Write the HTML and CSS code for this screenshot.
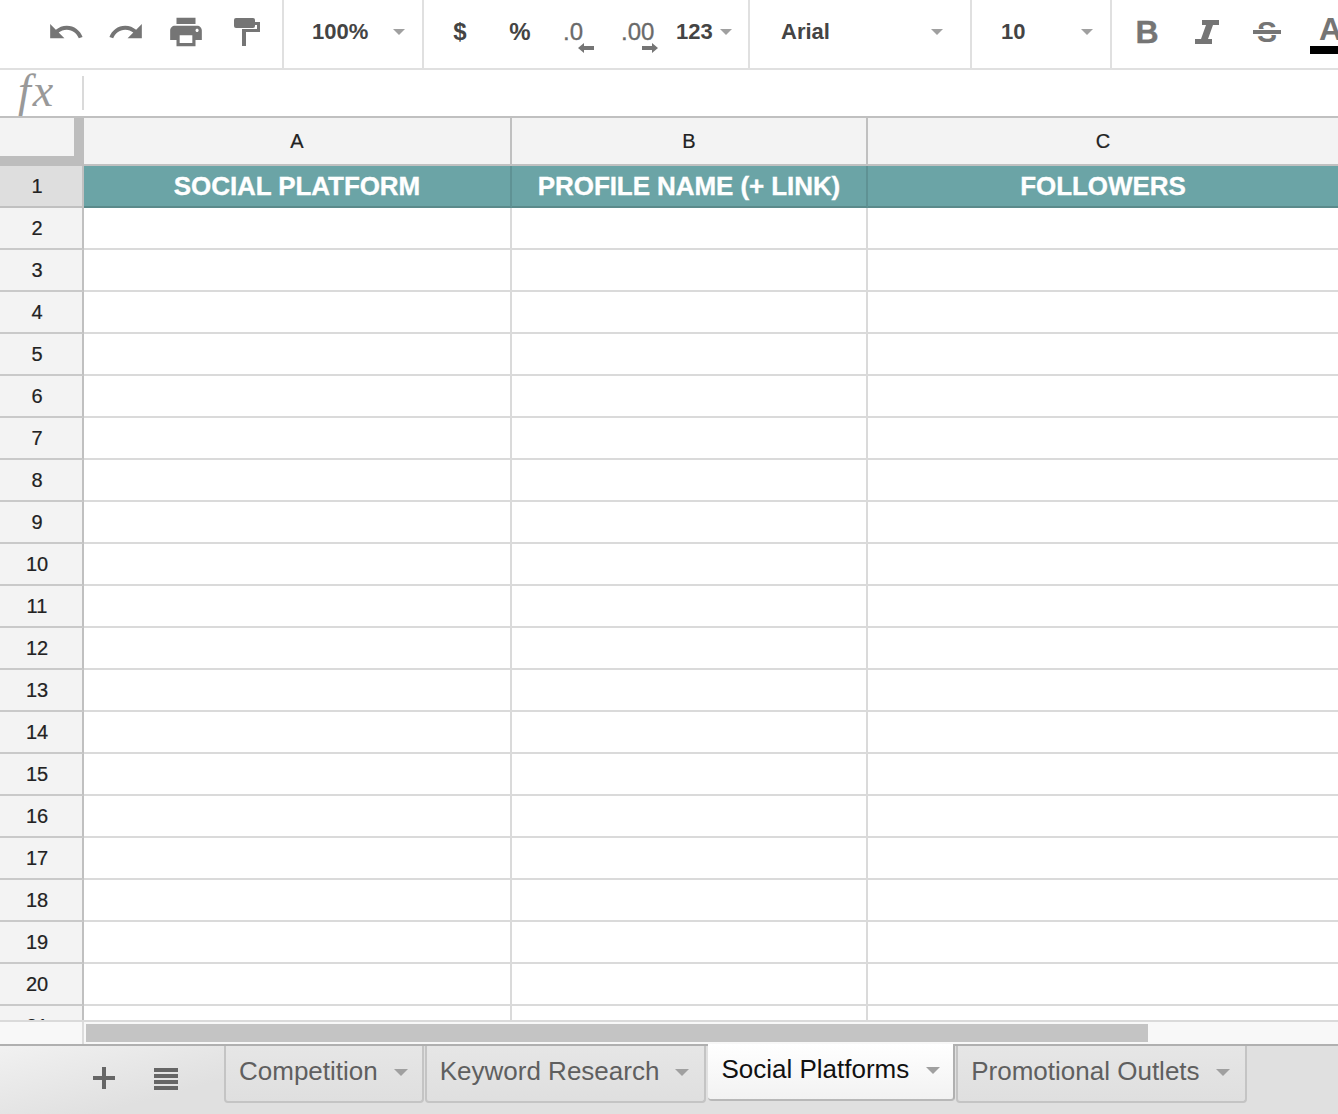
FILE: index.html
```html
<!DOCTYPE html>
<html lang="en">
<head>
<meta charset="utf-8">
<title>Social Platforms</title>
<link rel="stylesheet" href="styles.css">
</head>
<body>
<div class="app">
  <div class="toolbar">
    <div class="group group-history">
      <span class="slot"><svg class="icon-38" viewBox="0 0 24 24"><path d="M12.5 8c-2.65 0-5.05.99-6.9 2.6L2 7v9h9l-3.62-3.62c1.39-1.16 3.16-1.88 5.12-1.88 3.54 0 6.55 2.31 7.6 5.5l2.37-.78C21.08 11.03 17.15 8 12.5 8z"/></svg></span>
      <span class="slot"><svg class="icon-38" viewBox="0 0 24 24"><path d="M18.4 10.6C16.55 8.99 14.15 8 11.5 8c-4.65 0-8.58 3.03-9.96 7.22L3.9 16c1.05-3.19 4.05-5.5 7.6-5.5 1.95 0 3.73.72 5.12 1.88L13 16h9V7l-3.6 3.6z"/></svg></span>
      <span class="slot"><svg class="icon-38" viewBox="0 0 24 24"><path d="M19 8H5c-1.66 0-3 1.34-3 3v6h4v4h12v-4h4v-6c0-1.66-1.34-3-3-3zm-3 11H8v-5h8v5zm3-7c-.55 0-1-.45-1-1s.45-1 1-1 1 .45 1 1-.45 1-1 1zm-1-9H6v4h12V3z"/></svg></span>
      <span class="slot"><svg class="icon-paint" viewBox="0 0 26 28"><path d="M2 0h17a2 2 0 0 1 2 2v6a2 2 0 0 1-2 2H2a2 2 0 0 1-2-2V2a2 2 0 0 1 2-2z"/><path d="M21 4h5v10H12v14H8V11h15V7h-2z"/></svg></span>
    </div>
    <div class="group group-zoom">
      <span class="label">100%</span><span class="caret"></span>
    </div>
    <div class="group group-format">
      <span class="slot"><span class="label label-24">$</span></span>
      <span class="slot"><span class="label label-24">%</span></span>
      <span class="slot slot-dec">
        <span class="dec">.0</span>
        <svg class="arrow arrow-left" viewBox="0 0 16 10"><path d="M0 5l6-5v3h10v4H6v3z"/></svg>
      </span>
      <span class="slot slot-inc">
        <span class="dec">.00</span>
        <svg class="arrow arrow-right" viewBox="0 0 16 10"><path d="M16 5l-6-5v3H0v4h10v3z"/></svg>
      </span>
      <span class="more"><span class="label">123</span><span class="caret"></span></span>
    </div>
    <div class="group group-font">
      <span class="label">Arial</span><span class="caret"></span>
    </div>
    <div class="group group-size">
      <span class="label">10</span><span class="caret"></span>
    </div>
    <div class="group group-style">
      <span class="slot"><span class="glyph">B</span></span>
      <span class="slot"><svg class="icon-italic" viewBox="0 0 24 24"><path d="M7 0h17v5h-6l-5 14h4v5H0v-5h6l5-14H7z"/></svg></span>
      <span class="slot slot-strike"><span class="glyph glyph-s">S</span></span>
      <span class="slot slot-color"><span class="glyph glyph-a">A</span></span>
    </div>
  </div>

  <div class="formula">
    <span class="fx">fx</span>
    <span class="formula-sep"></span>
  </div>

  <div class="sheet">
    <div class="row row-head">
      <div class="rh corner"></div>
      <div class="cell a">A</div>
      <div class="cell b">B</div>
      <div class="cell c">C</div>
    </div>
    <div class="row row-title">
      <div class="rh">1</div>
      <div class="cell a">SOCIAL PLATFORM</div>
      <div class="cell b">PROFILE NAME (+ LINK)</div>
      <div class="cell c">FOLLOWERS</div>
    </div>
    <div class="row"><div class="rh">2</div><div class="cell a"></div><div class="cell b"></div><div class="cell c"></div></div>
    <div class="row"><div class="rh">3</div><div class="cell a"></div><div class="cell b"></div><div class="cell c"></div></div>
    <div class="row"><div class="rh">4</div><div class="cell a"></div><div class="cell b"></div><div class="cell c"></div></div>
    <div class="row"><div class="rh">5</div><div class="cell a"></div><div class="cell b"></div><div class="cell c"></div></div>
    <div class="row"><div class="rh">6</div><div class="cell a"></div><div class="cell b"></div><div class="cell c"></div></div>
    <div class="row"><div class="rh">7</div><div class="cell a"></div><div class="cell b"></div><div class="cell c"></div></div>
    <div class="row"><div class="rh">8</div><div class="cell a"></div><div class="cell b"></div><div class="cell c"></div></div>
    <div class="row"><div class="rh">9</div><div class="cell a"></div><div class="cell b"></div><div class="cell c"></div></div>
    <div class="row"><div class="rh">10</div><div class="cell a"></div><div class="cell b"></div><div class="cell c"></div></div>
    <div class="row"><div class="rh">11</div><div class="cell a"></div><div class="cell b"></div><div class="cell c"></div></div>
    <div class="row"><div class="rh">12</div><div class="cell a"></div><div class="cell b"></div><div class="cell c"></div></div>
    <div class="row"><div class="rh">13</div><div class="cell a"></div><div class="cell b"></div><div class="cell c"></div></div>
    <div class="row"><div class="rh">14</div><div class="cell a"></div><div class="cell b"></div><div class="cell c"></div></div>
    <div class="row"><div class="rh">15</div><div class="cell a"></div><div class="cell b"></div><div class="cell c"></div></div>
    <div class="row"><div class="rh">16</div><div class="cell a"></div><div class="cell b"></div><div class="cell c"></div></div>
    <div class="row"><div class="rh">17</div><div class="cell a"></div><div class="cell b"></div><div class="cell c"></div></div>
    <div class="row"><div class="rh">18</div><div class="cell a"></div><div class="cell b"></div><div class="cell c"></div></div>
    <div class="row"><div class="rh">19</div><div class="cell a"></div><div class="cell b"></div><div class="cell c"></div></div>
    <div class="row"><div class="rh">20</div><div class="cell a"></div><div class="cell b"></div><div class="cell c"></div></div>
    <div class="row"><div class="rh">21</div><div class="cell a"></div><div class="cell b"></div><div class="cell c"></div></div>
  </div>

  <div class="hscroll">
    <div class="hscroll-corner"></div>
    <div class="hscroll-thumb"></div>
  </div>

  <div class="tabbar">
    <svg class="tab-plus" viewBox="0 0 22 22"><path d="M9 0h4v9h9v4h-9v9H9v-9H0V9h9z"/></svg>
    <svg class="tab-list" viewBox="0 0 24 22"><path d="M0 0h24v4H0zM0 6h24v4H0zM0 12h24v4H0zM0 18h24v4H0z"/></svg>
    <div class="tab tab-first"><span>Competition</span><span class="caret"></span></div>
    <div class="tab"><span>Keyword Research</span><span class="caret"></span></div>
    <div class="tab tab-active"><span>Social Platforms</span><span class="caret"></span></div>
    <div class="tab"><span>Promotional Outlets</span><span class="caret"></span></div>
  </div>
</div>
</body>
</html>
```
FILE: styles.css
```css
* { box-sizing: border-box; }
html, body { margin: 0; padding: 0; }
body {
  width: 1338px;
  height: 1114px;
  overflow: hidden;
  background: #fff;
  font-family: "Liberation Sans", Arial, sans-serif;
}
.app { display: flex; flex-direction: column; width: 1338px; height: 1114px; overflow: hidden; }

/* toolbar */
.toolbar {
  display: flex;
  flex: 0 0 70px;
  border-bottom: 2px solid #e0e0e0;
}
.group {
  display: flex;
  align-items: center;
  height: 68px;
  padding-bottom: 4px;
  border-right: 2px solid #e0e0e0;
  flex: 0 0 auto;
}
.group svg { fill: #757575; display: block; }
.group-history { width: 284px; padding-left: 36px; }
.group-zoom { width: 140px; padding-left: 28px; padding-right: 17px; justify-content: space-between; }
.group-format { width: 326px; padding-left: 6px; }
.group-font { width: 222px; padding-left: 31px; padding-right: 27px; justify-content: space-between; }
.group-size { width: 140px; padding-left: 29px; padding-right: 17px; justify-content: space-between; }
.group-style { flex: 1 1 auto; padding-left: 5px; border-right: 0; overflow: hidden; }

.slot {
  position: relative;
  display: flex;
  align-items: center;
  justify-content: center;
  flex: 0 0 60px;
  height: 60px;
}
.icon-38 { width: 38px; height: 38px; }
.icon-paint { width: 26px; height: 28px; margin-left: 1px; }
.icon-italic { width: 24px; height: 24px; }

.label { font-size: 22px; font-weight: 700; color: #444; line-height: 26px; }
.label-24 { font-size: 24px; }
.dec { font-size: 24px; color: #6a6a6a; line-height: 26px; -webkit-text-stroke: .3px #6a6a6a; }
.slot-dec { justify-content: flex-start; padding-left: 13px; }
.slot-inc { justify-content: flex-start; padding-left: 11px; }
.arrow { position: absolute; top: 41px; width: 16px; height: 10px; }
.arrow-left { left: 28px; }
.arrow-right { left: 32px; }
.more { display: flex; align-items: center; margin-left: 6px; }
.more .caret { margin-left: 7px; }

.caret {
  display: inline-block;
  width: 0;
  height: 0;
  flex: 0 0 auto;
  border-left: 6px solid transparent;
  border-right: 6px solid transparent;
  border-top: 6px solid #a0a0a0;
}

.glyph { font-size: 32px; font-weight: 700; color: #757575; line-height: 36px; -webkit-text-stroke: .4px #757575; }
.glyph-s {
  position: relative;
  display: block;
  padding: 0 4px;
  font-size: 30px;
  -webkit-text-stroke: 0;
}
.glyph-s::after {
  content: "";
  position: absolute;
  left: 0;
  right: 0;
  top: 16px;
  height: 4px;
  background: #757575;
  box-shadow: 0 0 0 1px #fff;
}
.slot-color { flex-direction: column; justify-content: flex-start; align-items: flex-start; padding-left: 13px; padding-top: 8px; height: 60px; }
.glyph-a {
  display: block;
  width: 28px;
  height: 44px;
  padding-left: 9px;
  line-height: 38px;
  -webkit-text-stroke: 0;
  overflow: hidden;
  border-bottom: 8px solid #000;
}

/* formula bar */
.formula {
  display: flex;
  align-items: center;
  flex: 0 0 48px;
  height: 48px;
  padding-left: 18px;
  border-bottom: 2px solid #c0c0c0;
}
.fx {
  width: 64px;
  margin-top: -4px;
  font-family: "Liberation Serif", "Times New Roman", serif;
  font-style: italic;
  font-size: 46px;
  line-height: 46px;
  letter-spacing: 2px;
  color: #999;
}
.formula-sep { display: block; width: 2px; height: 34px; background: #dadada; }

/* sheet */
.sheet { flex: 0 0 902px; height: 902px; overflow: hidden; }
.row { display: flex; height: 42px; }
.rh {
  flex: 0 0 84px;
  display: flex;
  align-items: center;
  justify-content: center;
  padding-right: 8px;
  background: #f3f3f3;
  border-right: 2px solid #c0c0c0;
  border-bottom: 2px solid #c9c9c9;
  font-size: 20px;
  color: #222;
  -webkit-text-stroke: .2px #222;
}
.cell {
  display: flex;
  align-items: center;
  justify-content: center;
  border-right: 2px solid #dadada;
  border-bottom: 2px solid #dadada;
}
.a { flex: 0 0 428px; }
.b { flex: 0 0 356px; }
.c { flex: 1 1 auto; border-right: 0; }

.row-head { height: 48px; }
.row-head .cell {
  background: #f3f3f3;
  border-right-color: #c0c0c0;
  border-bottom-color: #c0c0c0;
  font-size: 20px;
  color: #222;
  -webkit-text-stroke: .2px #222;
}
.row-head .c { border-right: 0; }
.corner {
  padding: 0;
  border-right: 10px solid #bdbdbd;
  border-bottom: 10px solid #bdbdbd;
}

.row-title .rh { background: #dedede; border-bottom-color: #c0c0c0; }
.row-title .cell {
  background: #6ba4a6;
  border-right-color: #5f9294;
  border-bottom-color: #5b8a8b;
  font-size: 26px;
  font-weight: 700;
  color: #fff;
  letter-spacing: -.08px;
  -webkit-text-stroke: .35px #fff;
}
.row-title .c { border-right: 0; }

/* horizontal scroll */
.hscroll {
  display: flex;
  align-items: center;
  flex: 0 0 26px;
  height: 26px;
  background: #f8f8f8;
  border-top: 2px solid #dadada;
  border-bottom: 2px solid #b0b0b0;
}
.hscroll-corner { flex: 0 0 84px; height: 22px; border-right: 2px solid #dcdcdc; }
.hscroll-thumb { margin-left: 2px; width: 1062px; height: 18px; background: #c4c4c4; }

/* tabs */
.tabbar {
  display: flex;
  align-items: flex-start;
  flex: 1 1 auto;
  background: linear-gradient(165deg, #f1f1f1 0, #e0e0e0 22%, #e0e0e0 100%);
  padding-left: 93px;
}
.tabbar svg { fill: #666; display: block; flex: 0 0 auto; }
.tab-plus { width: 22px; height: 22px; margin-top: 21px; }
.tab-list { width: 24px; height: 22px; margin-top: 22px; margin-left: 39px; margin-right: 46px; }
.tab {
  display: flex;
  align-items: center;
  height: 57px;
  margin-right: 1px;
  padding: 0 15px 4px 13px;
  border: 2px solid #c4c4c4;
  border-top: 0;
  border-radius: 0 0 4px 4px;
  background: linear-gradient(#e6e6e6, #dfdfdf);
  font-size: 26px;
  color: #5f5f5f;
}
.tab .caret { margin-left: 16px; margin-top: 2px; border-left-width: 7px; border-right-width: 7px; border-top-width: 7px; }
.tab-first { padding-right: 14px; }
.tab-active {
  margin-top: -2px;
  margin-left: 1px;
  padding: 0 13px 4px 13px;
  border-color: transparent;
  border-bottom: 2px solid #b8b8b8;
  border-right-color: #b0b0b0;
  border-left: 0;
  background: linear-gradient(#fff, #f2f2f2);
  color: #111;
}
.tab-active .caret { margin-left: 17px; }
```
